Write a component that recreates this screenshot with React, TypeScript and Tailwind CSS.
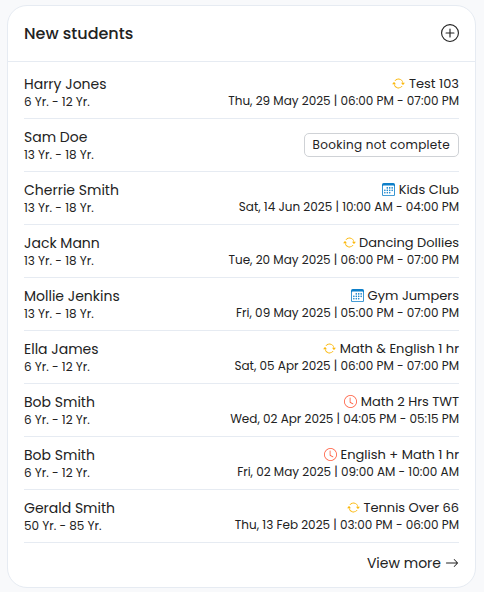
import React from 'react';
import { BsArrowRepeat, BsArrowRight, BsCalendar3, BsClock, BsPlusCircle } from 'react-icons/bs';

type BookingKind = 'recurring' | 'calendar' | 'timed';

interface Student {
  name: string;
  ages: string;
  kind?: BookingKind;
  activity?: string;
  slot?: string;
}

const STUDENTS: Student[] = [
  { name: 'Harry Jones', ages: '6 Yr. - 12 Yr.', kind: 'recurring', activity: 'Test 103', slot: 'Thu, 29 May 2025 | 06:00 PM - 07:00 PM' },
  { name: 'Sam Doe', ages: '13 Yr. - 18 Yr.' },
  { name: 'Cherrie Smith', ages: '13 Yr. - 18 Yr.', kind: 'calendar', activity: 'Kids Club', slot: 'Sat, 14 Jun 2025 | 10:00 AM - 04:00 PM' },
  { name: 'Jack Mann', ages: '13 Yr. - 18 Yr.', kind: 'recurring', activity: 'Dancing Dollies', slot: 'Tue, 20 May 2025 | 06:00 PM - 07:00 PM' },
  { name: 'Mollie Jenkins', ages: '13 Yr. - 18 Yr.', kind: 'calendar', activity: 'Gym Jumpers', slot: 'Fri, 09 May 2025 | 05:00 PM - 07:00 PM' },
  { name: 'Ella James', ages: '6 Yr. - 12 Yr.', kind: 'recurring', activity: 'Math & English 1 hr', slot: 'Sat, 05 Apr 2025 | 06:00 PM - 07:00 PM' },
  { name: 'Bob Smith', ages: '6 Yr. - 12 Yr.', kind: 'timed', activity: 'Math 2 Hrs TWT', slot: 'Wed, 02 Apr 2025 | 04:05 PM - 05:15 PM' },
  { name: 'Bob Smith', ages: '6 Yr. - 12 Yr.', kind: 'timed', activity: 'English + Math 1 hr', slot: 'Fri, 02 May 2025 | 09:00 AM - 10:00 AM' },
  { name: 'Gerald Smith', ages: '50 Yr. - 85 Yr.', kind: 'recurring', activity: 'Tennis Over 66', slot: 'Thu, 13 Feb 2025 | 03:00 PM - 06:00 PM' },
];

function BookingIcon({ kind }: { kind: BookingKind }) {
  if (kind === 'recurring') return <BsArrowRepeat size={13} className="-mr-[0.5px] mb-px text-[#fbb90f]" />;
  if (kind === 'calendar') return <BsCalendar3 size={13} className="mb-px text-[#0d7fc9]" />;
  return <BsClock size={13} className="mb-px text-[#ff5a3c]" />;
}

function StudentRow({ student }: { student: Student }) {
  return (
    <li className="flex h-[53px] items-center justify-between border-b border-[#e6ebf2] whitespace-nowrap">
      <div>
        <div className="text-sm leading-5">{student.name}</div>
        <div className="text-xs leading-4">{student.ages}</div>
      </div>
      {student.kind ? (
        <div className="flex flex-col items-end">
          <div className="flex items-center gap-1 text-[13px] leading-[18px]">
            <BookingIcon kind={student.kind} />
            <span>{student.activity}</span>
          </div>
          <div className="text-xs leading-4">{student.slot}</div>
        </div>
      ) : (
        <span className="flex h-6 items-center rounded-[5px] border border-[#cfd2d6] px-2 text-xs tracking-[0.3px]">
          Booking not complete
        </span>
      )}
    </li>
  );
}

export default function App() {
  return (
    <div className="h-[592px] w-[484px] bg-[#f8f9fb] pt-[5px] pl-[7px] font-[Poppins,Inter,sans-serif] text-[#222222]">
      <section className="h-[583px] w-[469px] rounded-[20px] border border-[#e6ebf2] bg-white">
        <header className="flex h-14 items-center justify-between border-b border-[#e6ebf2] px-4">
          <h2 className="text-base font-medium">New students</h2>
          <BsPlusCircle size={18} className="mb-px" />
        </header>
        <ul className="px-4 pt-1">
          {STUDENTS.map((student, index) => (
            <StudentRow key={index} student={student} />
          ))}
        </ul>
        <div className="flex h-10 items-center justify-end gap-1 px-4 text-sm">
          <span>View more</span>
          <BsArrowRight size={14} />
        </div>
      </section>
    </div>
  );
}
